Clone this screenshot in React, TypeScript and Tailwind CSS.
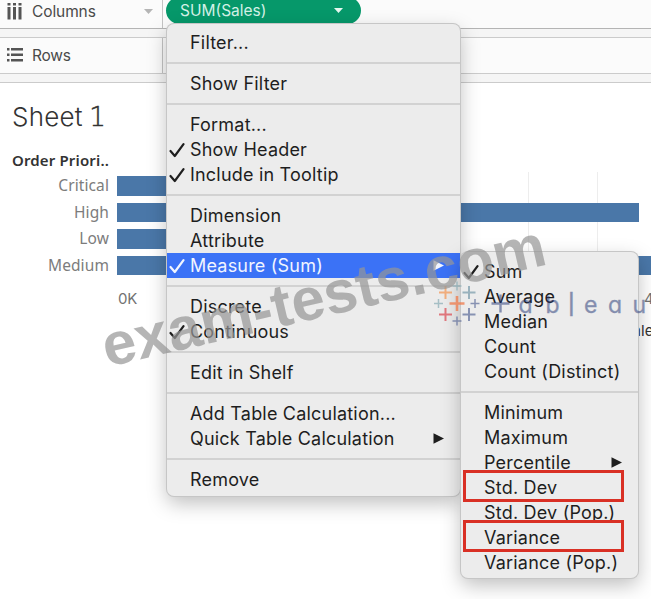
import React from "react";

type Entry = {
  label: string;
  checked?: boolean;
  active?: boolean;
  submenu?: boolean;
  outlined?: boolean;
};

const fieldMenu: Entry[][] = [
  [{ label: "Filter..." }],
  [{ label: "Show Filter" }],
  [
    { label: "Format..." },
    { label: "Show Header", checked: true },
    { label: "Include in Tooltip", checked: true },
  ],
  [
    { label: "Dimension" },
    { label: "Attribute" },
    { label: "Measure (Sum)", checked: true, active: true, submenu: true },
  ],
  [{ label: "Discrete" }, { label: "Continuous", checked: true }],
  [{ label: "Edit in Shelf" }],
  [{ label: "Add Table Calculation..." }, { label: "Quick Table Calculation", submenu: true }],
  [{ label: "Remove" }],
];

const measureMenu: Entry[][] = [
  [
    { label: "Sum", checked: true },
    { label: "Average" },
    { label: "Median" },
    { label: "Count" },
    { label: "Count (Distinct)" },
  ],
  [
    { label: "Minimum" },
    { label: "Maximum" },
    { label: "Percentile", submenu: true },
    { label: "Std. Dev", outlined: true },
    { label: "Std. Dev (Pop.)" },
    { label: "Variance", outlined: true },
    { label: "Variance (Pop.)" },
  ],
];

const bars = [
  { label: "Critical", width: "w-[200px]" },
  { label: "High", width: "w-[522px]" },
  { label: "Low", width: "w-[240px]" },
  { label: "Medium", width: "w-[534px]" },
];

function Check() {
  return (
    <svg className="h-4 w-4" viewBox="0 0 16 16" fill="none" stroke="currentColor" strokeWidth="2.2" strokeLinecap="round" strokeLinejoin="round">
      <path d="M1.5 9 L5.8 14 L14.5 2.2" />
    </svg>
  );
}

function MenuRow({ item }: { item: Entry }) {
  return (
    <div
      className={`relative flex h-[25px] items-center pl-[2px] text-[18px] leading-[25px] tracking-[0.2px] ${
        item.active ? "bg-[#3b72f6] text-[#f1f5ff]" : "text-[#1e1e1e]"
      }`}
    >
      <span className="flex w-[21px] shrink-0">{item.checked && <Check />}</span>
      <span className="whitespace-nowrap">{item.label}</span>
      {item.submenu && (
        <svg className="mr-[16px] ml-auto h-[11px] w-[11px]" viewBox="0 0 11 11" fill="currentColor">
          <path d="M0.5 0.3 L11 5.5 L0.5 10.7Z" />
        </svg>
      )}
      {item.outlined && <span className="absolute -top-[5px] left-[2px] h-[32px] w-[161px] border-[3px] border-[#d93025]" />}
    </div>
  );
}

function Menu({ groups, place }: { groups: Entry[][]; place: string }) {
  return (
    <div className={`absolute rounded-[7px] bg-[#ececec] shadow-[0_0_0_1px_#c6c6c6,0_7px_20px_rgba(0,0,0,0.26)] ${place}`}>
      {groups.map((group, i) => (
        <React.Fragment key={i}>
          {i > 0 && (
            <div className="flex h-4 items-center pb-px">
              <div className="h-[2px] w-full bg-[#d2d2d2]" />
            </div>
          )}
          {group.map((item) => (
            <MenuRow key={item.label} item={item} />
          ))}
        </React.Fragment>
      ))}
    </div>
  );
}

function Cross({ x, y, r, color, w = 1.5 }: { x: number; y: number; r: number; color: string; w?: number }) {
  return <path d={`M${x - r} ${y}H${x + r}M${x} ${y - r}V${y + r}`} stroke={color} strokeWidth={w} />;
}

function TableauMark() {
  return (
    <svg className="absolute top-[280px] left-[430px] h-[50px] w-[221px]" viewBox="430 280 221 50">
      <g opacity="0.75">
        <Cross x={457} y={303.5} r={7.5} color="#f07a4a" w={2.6} />
        <Cross x={445.5} y={292.5} r={6.5} color="#f39a5a" w={2} />
        <Cross x={469} y={292.5} r={6.5} color="#7f9fae" w={2} />
        <Cross x={445.5} y={314.5} r={6.5} color="#dc5058" w={2} />
        <Cross x={469} y={314.5} r={6.5} color="#66749f" w={2} />
        <Cross x={457} y={286} r={4.5} color="#8fb0b8" />
        <Cross x={457} y={321} r={4.5} color="#66749f" />
        <Cross x={438.5} y={303.5} r={4.5} color="#8fb0b8" />
        <Cross x={475} y={303.5} r={4.5} color="#66749f" />
      </g>
      <g opacity="0.53">
        <Cross x={500.5} y={303.5} r={9} color="#273a78" w={2.4} />
        <text
          x="518.5 545.5"
          y="312.5"
          className="font-['Inter'] text-[23px] [font-feature-settings:'cv11']"
          fill="#273a78"
          stroke="#273a78"
          strokeWidth="0.3"
        >
          ab
          <tspan x="567.5" y="315.5" className="text-[33px] font-light">
            l
          </tspan>
          <tspan x="584 608 632.5" y="312.5">
            eau
          </tspan>
        </text>
      </g>
    </svg>
  );
}

export default function App() {
  return (
    <div className="relative h-[599px] w-[651px] overflow-hidden bg-white font-['Inter',sans-serif]">
      <div className="flex h-[29px] border-b border-[#b4b4b4] bg-[#fbfbfb]">
        <div className="flex w-[163px] shrink-0 items-center border-r border-[#c4c4c4] pr-[9px] pb-[6px] pl-[7px] text-[#4a4a4a]">
          <svg className="h-[17px] w-[15px]" viewBox="0 0 15 17" fill="#555">
            <path d="M0.5 0h3v2.5h-3zM6 0h3v2.5h-3zM11.5 0h3v2.5h-3zM0.5 4h3v12.5h-3zM6 4h3v12.5h-3zM11.5 4h3v12.5h-3z" />
          </svg>
          <span className="mt-[2px] ml-[10px] text-[15.5px] tracking-[-0.1px]">Columns</span>
          <svg className="ml-auto h-[5px] w-[9px]" viewBox="0 0 9 5" fill="#b5b5b5">
            <path d="M0 0h9L4.5 5z" />
          </svg>
        </div>
        <div className="-mt-[3px] ml-[3px] flex h-[27px] w-[195px] items-center rounded-full bg-[#06986a] pr-[18px] pl-[14px] text-[#d3f1e6]">
          <span className="text-[15.5px]">SUM(Sales)</span>
          <svg className="ml-auto h-[5px] w-[9px]" viewBox="0 0 9 5" fill="#e6f7f0">
            <path d="M0 0h9L4.5 5z" />
          </svg>
        </div>
      </div>
      <div className="h-2 bg-[#f5f5f5]" />
      <div className="flex h-[37px] border-y border-[#cbcbcb] bg-[#fbfbfb]">
        <div className="flex w-[163px] items-center border-r border-[#c4c4c4] pb-[2px] pl-[7px] text-[#4a4a4a]">
          <svg className="h-[14px] w-[16px]" viewBox="0 0 16 14" fill="#555">
            <path d="M0 0h2.5v2.5H0zM4 0h12v2.5H4zM0 5.5h2.5V8H0zM4 5.5h12V8H4zM0 11h2.5v2.5H0zM4 11h12v2.5H4z" />
          </svg>
          <span className="mt-[3px] ml-[9px] text-[15.5px] tracking-[-0.2px]">Rows</span>
        </div>
      </div>
      <div className="h-[9px] border-b border-[#cbcbcb] bg-[#f5f5f5]" />

      <h1 className="mt-[14px] ml-[12px] h-[40px] text-[26px] leading-[40px] font-light tracking-[0.2px] whitespace-pre text-[#333]">
        Sheet <span className="-ml-px font-['DejaVu_Sans'] font-extralight [-webkit-text-stroke:0.5px_#333]">1</span>
      </h1>
      <div className="mt-[12px] ml-[12px] h-[22px] font-['Noto_Sans'] text-[15px] leading-[22px] font-semibold tracking-[0.15px] text-[#333]">Order Priori..</div>

      <div className="relative mt-px h-[108px]">
        <div className="absolute top-0 left-[528px] h-full w-px bg-[#ededed]" />
        <div className="absolute top-0 left-[597px] h-full w-px bg-[#ededed]" />
        <div className="relative flex flex-col pt-[0.5px]">
          {bars.map((bar) => (
            <div key={bar.label} className="flex h-[26.5px] items-center">
              <span className="w-[109px] shrink-0 text-right font-['Noto_Sans'] text-[15.5px] tracking-[0.1px] text-[#7c7c7c]">{bar.label}</span>
              <div className={`ml-[8px] h-[19.5px] shrink-0 bg-[#4a77a8] ${bar.width}`} />
            </div>
          ))}
        </div>
      </div>
      <div className="mt-[8px] flex h-[22px] pl-[118px] text-[15px] leading-[22px] text-[#737373]">
        <span className="w-[526px] shrink-0 tracking-[-0.3px]">0K</span>
        <span>400K</span>
      </div>
      <div className="mt-[10px] ml-[623px] w-[60px] text-[15px] leading-[22px] text-[#333]">Sales</div>

      <Menu groups={fieldMenu} place="top-[24px] left-[167px] w-[293px] pt-[6px] pb-[4px]" />
      <Menu groups={measureMenu} place="top-[252px] left-[461px] w-[177px] pt-[7px] pb-[3px]" />

      <TableauMark />
      <div className="absolute top-[324px] left-[108px] origin-bottom-left -rotate-[13.1deg] font-['Liberation_Sans'] text-[60px] leading-[46px] font-bold whitespace-nowrap text-[#969696]/70">
        exam-tests.com
      </div>
    </div>
  );
}
